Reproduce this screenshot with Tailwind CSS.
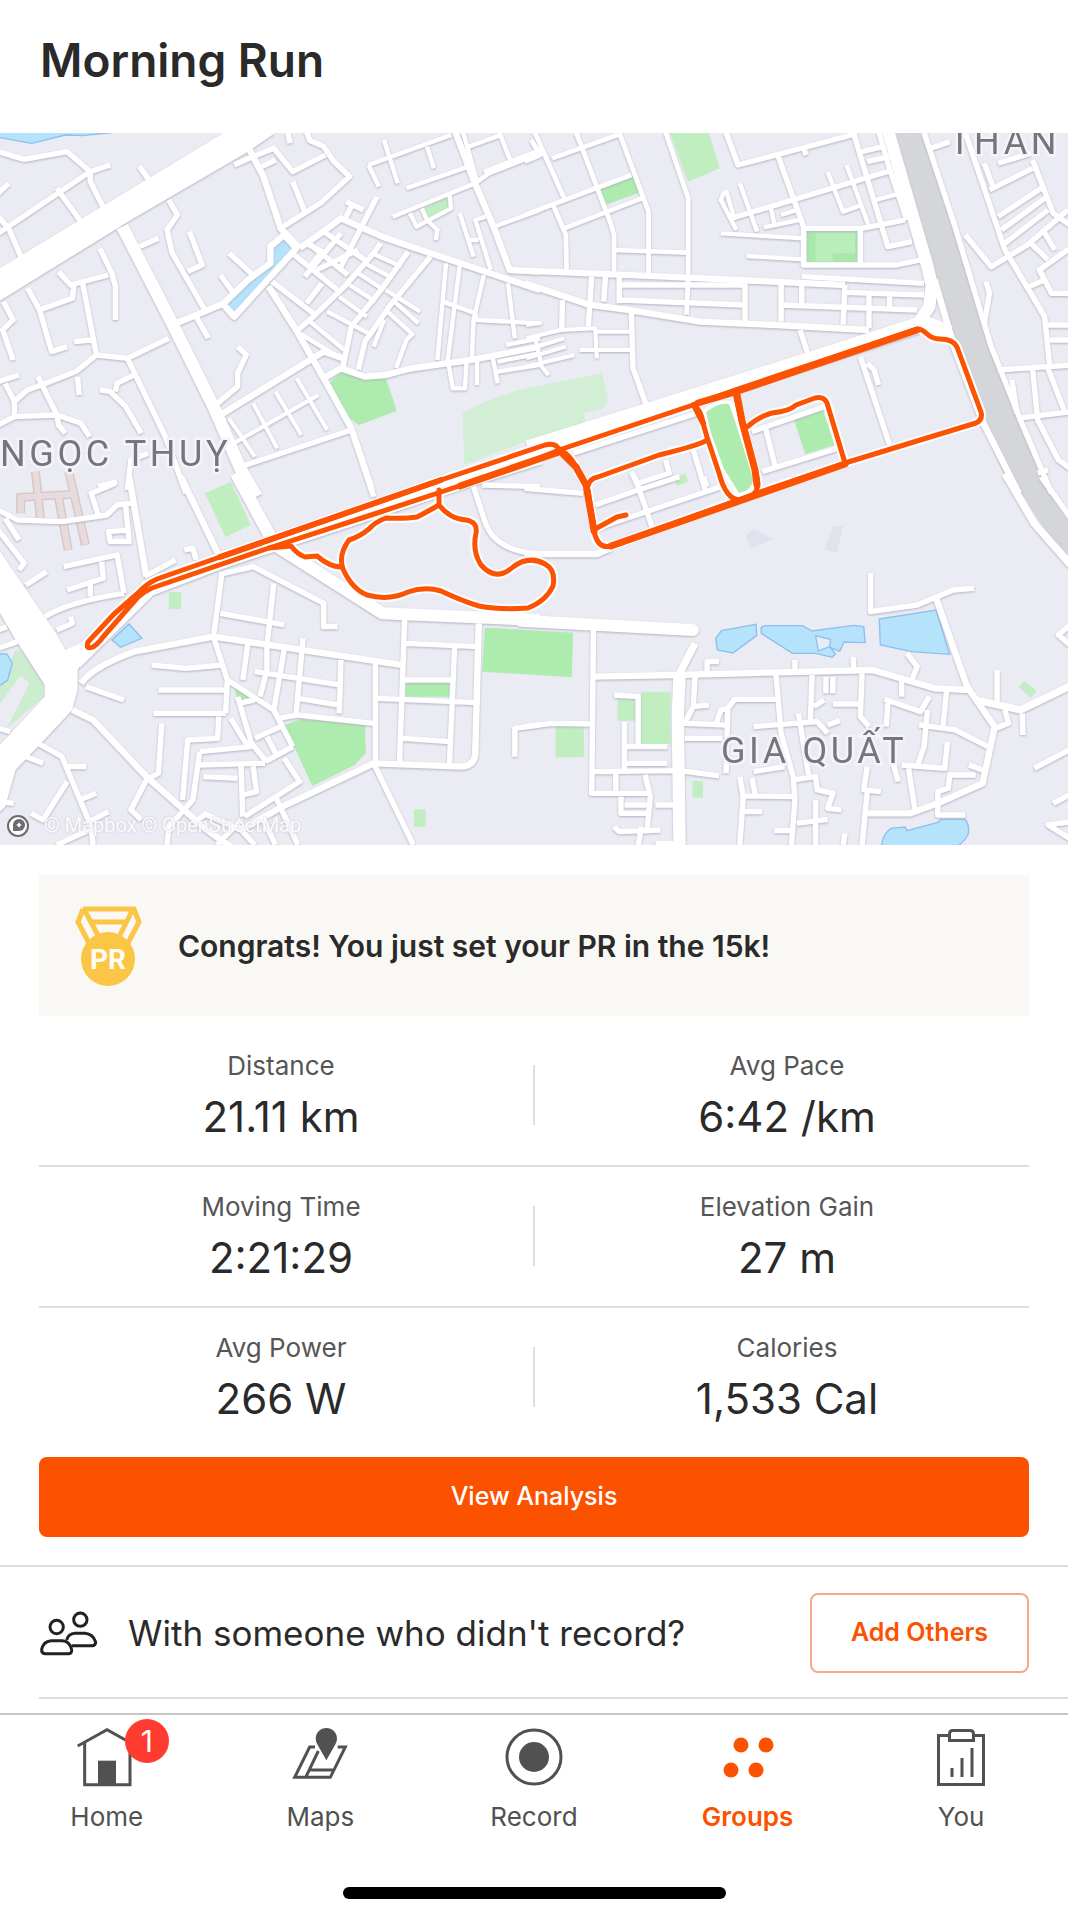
<!DOCTYPE html>
<html lang="en">
<head>
  <meta charset="UTF-8">
  <meta name="viewport" content="width=device-width, initial-scale=1.0">
  <title>Morning Run</title>

  <!-- Tailwind CSS -->
  <script src="https://cdn.jsdelivr.net/npm/@tailwindcss/browser@4"></script>
</head>

<body class="min-h-screen bg-white font-[Inter,sans-serif] text-[#2a2a2a]">

  <!-- Header -->
  <header class="px-10 pt-7 pb-[41px]">
    <h1 class="text-[46px] leading-[64px] font-semibold">Morning Run</h1>
  </header>

  <main>
    <!-- Route Map -->
    <svg class="block w-full h-auto bg-[#ebebf4]" viewBox="0 0 1068 712" role="img" aria-label="Route map" fill="none">

      <!-- Parks and water -->
      <g stroke="none">
        <g transform="translate(0 -13) scale(.3444 .3333)">
          <path fill="#b5e3fc" stroke="#8fbfee" stroke-width="4" d="M-5 52 L92 70 190 45 240 47 325 38 V30 H-5Z"/>
          <path fill="#b5e3fc" d="M658 548 L720 480 745 475 792 430 790 385 825 355 858 388 682 575Z"/>
          <path fill="#c0eec1" d="M1230 265 L1300 230 1308 270 1242 298Z"/>
          <path fill="#aeebae" d="M955 790 L990 757 1060 777 1120 773 1152 872 1042 916 1015 895Z"/>
        </g>
        <g transform="translate(528 -13) scale(.3444 .3333)">
          <path fill="#c0eec1" d="M412 38 H525 L557 145 465 185Z"/>
          <path fill="#aeebae" d="M203 208 L305 168 322 218 225 255Z"/>
          <path fill="#d2efd5" d="M-190 878 Q-90 825 0 803 L215 760 232 835 222 865 165 880 165 910 -20 970 -185 1035Z"/>
          <path fill="#a9e7ab" d="M810 332 H958 V428 H810Z"/>
          <path fill="#b9edb9" d="M835 335 H950 V400 H885 V425 H835Z"/>
          <path fill="#d5d6da" d="M1055 30 H1143 L1235 320 1340 680 1425 900 1515 1120 H1405 L1320 920 1225 640 1140 330Z"/>
          <path fill="#aeebae" d="M772 898 L855 868 890 975 805 1003Z"/>
          <path fill="#c0eec1" d="M425 1075 L457 1060 465 1085 432 1098Z"/>
        </g>
        <g transform="translate(0 347) scale(.3444 .3333)">
          <path fill="#c0eec1" d="M595 40 L670 5 728 135 655 172Z"/>
          <path fill="#c0eec1" d="M490 337 H526 V388 H490Z M1202 988 H1236 V1040 H1202Z"/>
          <path fill="#b5e3fc" stroke="#8fbfee" stroke-width="4" d="M325 480 L375 432 412 475 350 502Z"/>
          <path fill="#cdedd0" d="M-5 625 L45 510 70 510 125 610 128 650 20 745 85 610 60 585 -5 680Z"/>
          <path fill="#b5e3fc" stroke="#8fbfee" stroke-width="4" d="M-5 522 H20 L36 550 22 600 -5 620Z"/>
          <path fill="#aeebae" d="M825 735 L875 717 1060 735 1062 820 1030 855 907 918Z"/>
          <path fill="#aeebae" d="M680 620 L730 652 690 665Z M1178 605 H1305 V650 H1178Z"/>
          <path fill="#aeebae" d="M1408 443 L1664 458 1660 592 1400 575Z"/>
        </g>
        <g transform="translate(528 347) scale(.3444 .3333)">
          <path fill="#d5d6da" d="M1405 -5 H1485 L1580 145 V240 L1500 150Z"/>
          <path fill="#dfe3ec" d="M633 165 L655 148 713 178 645 205Z M885 140 L915 137 897 220 860 208Z"/>
          <g fill="#b5e3fc" stroke="#8fbfee" stroke-width="4">
            <path d="M545 475 L562 452 662 433 664 467 595 519 550 510Z"/>
            <path d="M677 443 L685 437 H797 L825 453 945 436 975 440 979 488 918 486 905 514 878 502 893 522 883 532 835 520 768 520 677 460Z"/>
            <path d="M1020 417 L1185 390 1224 523 1115 515 1023 495Z"/>
            <path d="M1025 1110 Q1028 1060 1055 1045 L1095 1041 1100 1052 1190 1027 1200 1018 H1270 Q1285 1040 1277 1065 1265 1090 1230 1110Z"/>
          </g>
          <path fill="#ebebf4" stroke="#8fbfee" stroke-width="4" d="M835 467 L878 478 876 500 843 513Z"/>
          <path fill="#c0eec1" d="M328 635 H413 V792 H328Z M260 655 H312 V722 H260Z M80 738 H162 V832 H80Z M478 903 H508 V953 H478Z M1425 622 L1442 603 1477 633 1460 653Z"/>
        </g>
      </g>

      <!-- Pedestrian lanes -->
      <g transform="translate(0 347) scale(.3444 .3333)">
        <path stroke="#d8c5c7" stroke-width="26" d="M103 -25 L118 120 M60 100 V52 L225 42 M200 -25 L248 195 M170 52 L198 210"/>
        <path stroke="#e8dbdb" stroke-width="18" d="M103 -25 L118 118 M60 98 V52 L223 42 M200 -25 L248 193 M170 52 L198 208"/>
      </g>

      <!-- Streets -->
      <g class="stroke-white drop-shadow-[0_1px_1px_#b2b2c2]" stroke-width="16" stroke-linejoin="round">
        <g transform="translate(0 -13) scale(.3444 .3333)">
          <path fill="#fff" stroke="none" d="M-5 448 L650 38 H800 L720 95 380 300 -5 545Z"/>
          <path stroke-width="36" d="M355 320 L500 610 620 860 700 1050 745 1130"/>
          <path stroke-width="19" d="M725 90 L765 170 815 325 870 385 M870 385 L945 330 990 295 1110 350 1250 400 1568 510 M640 885 L940 695 995 715 M780 500 L860 630 940 775 1020 925 1080 1110 M940 775 L990 745 1060 770 1120 765 1195 745 1370 720 1568 680 M1320 30 L1375 180 1435 325 1480 450 1568 455 M500 615 L650 550 720 480 785 430 785 380 825 345 860 385 680 590 650 555"/>
          <path d="M-5 95 L70 118 195 95 262 155 262 185 300 262 M-5 340 L60 295 262 155 320 135 M-5 290 L25 325 65 420 M-5 220 L25 190 M165 205 L235 305 M405 138 L435 185 M680 135 L735 110 795 85 850 155 945 105 M760 140 L800 120"/>
          <path d="M888 30 L900 62 940 80 970 125 1015 170 930 250 815 325 M850 185 L885 275 M835 35 L842 70 M490 240 L515 285 485 330 500 400 595 570 M405 380 L460 355 M550 335 L587 435 545 455 M665 400 L735 465 M640 465 L675 515 M570 590 L605 655"/>
          <path d="M490 655 L370 715 280 705 220 755 120 795 80 810 42 845 42 890 -5 915 M42 890 L165 885 235 910 260 950 M165 885 L170 915 190 940 M240 490 L280 705 M290 385 L325 460 335 500 335 600 M170 455 L205 495 315 465 M80 505 L115 570 150 695 195 680 M215 495 L210 535 115 570 M215 665 L265 660 M10 545 L38 600 8 630 38 720"/>
          <path d="M225 770 L230 825 M110 770 L165 885 M15 790 L42 845 M-5 785 L55 765 M370 715 L480 950 540 1120 M390 765 L340 790 335 815 M290 810 L320 815 365 860 410 940 M690 680 L715 705 690 760 690 800 620 860 M430 1000 L380 1020 370 1110 M340 1085 L285 1100"/>
          <path stroke-width="12" d="M665 895 L740 1010 M735 850 L805 985 M800 815 L875 945 M862 775 L950 930 M670 975 L925 825"/>
          <path d="M700 1040 L1020 930 M1005 245 L1055 270 M1095 230 L1010 400 990 440 M1025 250 L1000 300 M855 405 L980 510 M890 365 L1010 465 M940 335 L1060 420 M890 370 L935 395 900 440 M990 340 L885 470 M1040 390 L920 450"/>
          <path d="M1105 370 L1085 400 1000 500 910 590 865 630 M1185 395 L1110 505 1020 620 995 745 M1250 410 L1130 560 1060 665 1040 750 M790 485 L910 580 M890 550 L935 490"/>
          <path stroke-width="13" d="M1080 400 L1165 440 M1060 430 L1140 475 M1040 460 L1115 510 M1015 495 L1090 545 M985 530 L1065 590 M1120 510 L1220 575 M1140 540 L1215 610 M1125 575 L1200 645 M950 575 L1070 640 M900 605 L1000 690 M870 640 L990 715 M1115 600 L1085 680 M1200 640 L1180 660 1150 745"/>
          <path stroke-width="13" d="M1295 430 L1270 720 M1335 435 L1300 720 1315 805 1350 805 1355 720 M1405 465 L1375 600 1370 720 M1475 490 L1495 655 M1285 545 L1380 580 1385 600 1568 610 M1385 720 V795 M1430 710 L1445 790 M1445 725 L1568 700 M1445 755 L1568 735 M1470 675 L1568 655"/>
          <path stroke-width="13" d="M1070 135 L1310 45 M1070 135 L1100 200 M1115 60 L1155 190 M1240 80 L1260 145 M1180 205 L1360 140 M1140 290 L1380 190 1420 160 1568 100 M1450 38 L1485 130 M1360 80 L1455 45 M1345 38 L1385 185 M1405 155 L1568 90 M1305 225 L1310 265 1210 320 1190 280 M1225 265 L1240 300 1270 330 1265 360 M1335 280 L1375 410 M1410 290 L1380 300 1425 450 M1435 320 L1568 270 M1360 360 H1390"/>
        </g>

        <g transform="translate(528 -13) scale(.3444 .3333)">
          <path stroke-width="36" d="M1045 30 L1160 440 1178 520 M1175 480 L1165 560 1130 615"/>
          <path stroke-width="19" d="M1180 480 L1240 690 1320 905 1425 1120 M-10 452 L400 470 920 495 M-10 490 L180 555 290 570 500 605 720 615 990 630"/>
          <path stroke-width="48" d="M0 985 L580 798 1150 610 1225 640"/>
          <path d="M1150 38 L1240 320 1345 680 1430 900 1520 1120"/>
          <path stroke-width="14" d="M20 38 L105 235 M140 38 L240 310 250 345 250 455 M265 38 L350 275 350 460 M400 38 L465 235 465 480 460 585 M70 115 L260 45 M-10 285 L300 165 M75 260 L110 345 112 450 M105 325 L330 235 M250 390 L465 398 M-10 125 L35 105 10 60"/>
          <path d="M185 470 L175 620 M225 470 L220 545 M265 470 V550 M270 495 H625 M270 540 L625 555 M630 490 V605 M735 490 V605 M795 490 V550 M735 555 L1130 570 M920 495 L915 615 M920 517 L1150 525 M990 520 V625 M1050 530 V570 M100 540 L98 630 M300 575 L305 745 345 860 M790 630 L812 700"/>
          <path stroke-width="12" d="M-5 655 L95 630 195 625 200 715 M-5 690 L105 655 M-5 740 L135 705 M20 650 L40 740 60 765 M150 690 H300 M200 635 H300 M-5 715 L110 680 M-5 615 L40 608"/>
          <path d="M575 38 L610 135 940 45 M725 105 L800 320 M800 85 L808 105 M945 38 L1045 380 1115 365 M1020 38 L1045 130 1100 300 M970 95 L1030 80 M985 125 L1050 110 M590 295 L1060 150"/>
          <path stroke-width="13" d="M870 155 L915 275 970 255 M925 135 L990 320 M1010 240 L1080 220 M570 215 L560 240 605 330 M575 210 L600 300 M615 190 L665 335 M560 340 L800 355 M635 408 L800 418 M685 322 L790 300 M705 265 L715 310 M735 285 L780 270"/>
          <path d="M800 320 V435 H1070 L1140 420 M800 325 H970 L1095 300 M965 330 V430 M795 470 L1150 490"/>
          <path d="M1270 38 L1300 130 1385 390 1500 590 1515 740 M1325 130 L1350 200 M1465 120 L1525 280 1580 320 M1340 210 L1465 145 M1365 290 L1490 205 M1375 330 L1500 235 M1385 370 L1510 270 M1270 345 L1345 440 1450 375 1568 270 M1170 85 L1225 65 M1365 130 L1460 100 M1330 485 L1340 520 1325 610"/>
          <path d="M1365 750 L1580 735 M1505 615 H1580 M1515 660 H1580 M1405 780 L1420 880 M1465 745 L1480 900 1540 1020 1580 1050 M1510 745 L1560 880 M1420 895 L1580 875 M1460 370 L1510 420 M1495 330 L1530 390 M1580 380 L1485 450 1520 520 H1580 M1455 500 L1500 480 M1480 1060 L1510 1050"/>
          <path d="M965 710 L1050 975 M985 730 L1005 750 1018 795 M690 925 L720 1050 M680 1055 L900 985 M650 935 L860 860 M130 1000 L490 880 M480 990 L515 1110 M300 1055 L325 1110 M400 1020 L410 1060 320 1090"/>
        </g>

        <g transform="translate(0 347) scale(.3444 .3333)">
          <path fill="#fff" stroke="none" d="M-5 205 L30 260 160 455 190 510 250 480 265 505 225 570 225 630 210 690 110 800 45 870 15 980 -5 1000 V800 L130 650 130 615 40 470 -5 390Z"/>
          <path stroke-width="50" d="M215 545 L430 325 645 240 1050 103 1280 22 1568 -72"/>
          <path stroke-width="36" d="M685 -20 L790 180 M790 190 L1110 400 1568 420"/>
          <path stroke-width="19" d="M235 610 Q270 560 390 515 L620 470 1165 555 M210 690 L270 720 425 890 600 1050 670 1100 M700 1050 L820 980 1085 850 1345 860 Q1378 855 1380 820 L1390 430 M375 -10 L425 290 M525 -10 L635 225"/>
          <path d="M-5 90 L50 120 180 125 310 105 340 75 380 70 M335 10 L265 40 285 105 M15 115 L55 180 M-5 150 L70 250 55 270 M75 315 L135 275 M365 80 L375 185 320 185 315 155 375 150 M185 260 L340 225 360 340 M295 245 L300 295 195 330 M262 310 V350 M130 410 Q200 365 360 340 M420 290 L510 240 M535 210 L560 205 570 240 M165 450 L210 430 205 410 M-5 505 L50 485 M-5 450 L20 440"/>
          <path d="M645 275 L620 470 660 600 795 690 850 800 M825 835 L870 905 710 1010 M650 280 L735 260 940 370 940 440 980 440 M795 310 L775 500 775 570 755 650 M640 400 L825 435 M250 620 L360 660 M440 555 L540 565 645 555 M460 630 H655 M445 700 H655 M660 600 L655 700 M635 710 L632 775 545 780 530 960 M470 730 L460 880 425 900 380 990 410 1020"/>
          <path d="M110 790 L180 830 265 1040 270 1095 M190 860 H250 M75 830 L125 850 M195 905 L125 1020 90 1000 M230 960 L280 940 M250 1030 L315 995 M165 1095 L260 1050 M-5 745 L30 755 M-5 965 L40 970"/>
          <path d="M720 490 L705 600 M825 510 L795 690 M880 475 L860 700 M740 575 L985 615 M990 540 L985 700 M865 655 L980 675 M810 715 L865 705 1085 730 M1090 550 V850 M690 650 L730 790 770 840 M695 670 L740 660 M770 845 L850 800 M670 715 L720 800 M740 775 L815 740 M775 770 L800 820"/>
          <path d="M580 815 L730 800 M580 815 L560 960 490 1040 485 1095 M580 855 L770 850 M590 890 L690 895 M700 860 L705 1010 M735 860 L745 935 705 945 M800 950 L865 1095 M1085 850 L1200 1095 M590 1000 L700 1050 M560 1030 L600 1000 M630 1095 L700 1020 M700 1050 L740 1095 M760 1010 L800 1095"/>
          <path d="M1175 420 L1160 850 M1175 490 L1390 500 M1320 500 L1305 855 M1175 600 H1310 M1095 655 L1385 668 M1170 775 L1305 785 M1495 830 V745 L1568 735 M1375 20 L1410 130 Q1440 215 1568 222 M1400 15 L1568 20 M1068 -10 L1085 50"/>
        </g>

        <g transform="translate(528 347) scale(.3444 .3333)">
          <path stroke-width="36" stroke-linecap="round" d="M-20 422 L478 450 M440 590 L435 700 440 1110"/>
          <path stroke-width="22" d="M1385 -20 L1470 130 1580 260 M1300 660 L1430 690 1580 615 M485 490 L440 580"/>
          <path d="M1490 -10 L1580 120"/>
          <path stroke-width="19" d="M190 590 L430 585 1000 570 1180 625 1280 630 M1185 355 L1275 620 1355 740 1320 910 1190 970 1110 1000 985 1000 M-10 222 L200 222 240 205"/>
          <path d="M-10 25 L160 40 M195 75 L320 30 440 -10 M310 -10 L360 140 M200 145 L330 100 560 20 M510 -10 L518 20 M190 450 L185 940 H350 M520 580 V545 H555 M775 540 V575 M945 530 V570 M995 280 V395 L1130 375 1235 330 1295 325 M1362 570 V670 M1100 520 L1130 560 1115 600 M1085 600 V650 M1215 635 L1205 740 M1385 690 L1395 730 1360 745 M1435 700 L1437 765"/>
          <path d="M250 645 L320 650 V800 M280 725 V880 M285 800 H405 M285 850 H405 M190 875 L440 872 555 888 M255 880 V940 M340 885 L355 950 345 1060 M270 950 V1000 H350 M280 975 H350 M370 975 H430 M250 1040 L265 1055 385 1050 M320 1095 L330 1040 M370 1090 H430 M-10 740 L70 730 185 732"/>
          <path d="M485 590 L480 680 525 675 M480 680 L455 730 575 735 M545 735 L560 690 580 685 600 658 720 658 M580 690 L575 880 M455 775 H565 M720 585 L735 760 770 890 775 960 765 1095 M825 585 L820 720 M865 590 V640 M885 590 V640 M970 580 L965 710 990 740 M830 680 L860 660 M885 672 H965 M655 740 L840 725 870 760 M785 700 L815 885 M870 735 L905 722 M1035 658 L1140 695 1165 650 M1045 670 L1040 740 M1160 690 L1150 800 1130 860 M1135 735 L1240 750 1335 800"/>
          <path d="M1085 855 L1210 865 1218 785 M1105 865 L1125 1000 M1060 850 L1075 905 M655 875 L745 860 M615 890 L625 950 615 1095 M625 948 L770 950 M650 895 L660 945 M625 995 H680 M770 900 L835 890 840 930 885 940 870 985 910 990 M780 1030 L870 1018 M835 960 V1095 M715 1052 H765 M985 860 L975 930 1025 935 M985 935 L970 1095 M1300 885 H1225 L1220 925 1190 935 1190 1005 1270 1005 M1280 855 L1320 870 M915 1095 L920 1060"/>
          <path d="M1580 430 L1540 465 1580 500 M1470 865 L1580 805 M1525 970 L1580 940 M1580 1025 L1510 1035 1580 1080"/>
        </g>
      </g>

      <!-- Park inside the loop -->
      <path fill="#fff" d="M703 277 Q716 265 732 268 L741 292 757 345 Q756 361 737 364 L720 337 708 303Z"/>
      <path fill="#aeebae" d="M706 279 Q719 269 729 271 L735 288 753 345 Q753 357 739 360 L724 336 711 300Z"/>

      <!-- Recorded route -->
      <defs>
        <g id="route" stroke-linejoin="round" stroke-linecap="round">
          <path d="M917 196 Q922 196 926 200 Q932 206 940 206 Q953 206 957 214 L981 279 Q983 287 976 290 L845 330 760 359 611 413 Q599 416 595 402 L588 357 Q582 345 576 334 Q569 320 559 317 L693 272 735 257Z"/>
          <path d="M559 317 Q556 309 545 312 L441 347 362 375 220 424 157 446 Q146 451 138 460 L114 481 88 509 Q85 517 93 514 Q98 511 103 504 L138 464 Q145 458 152 455 L269 415 362 385 441 359 528 330 559 317"/>
          <path d="M439 357 V372 Q425 380 417 384 Q405 386 386 385 Q375 389 369 396 Q359 404 349 407 Q338 422 343 436 Q352 456 367 462 Q389 468 408 459 Q425 453 441 458 Q462 468 479 473 Q500 477 528 475 Q546 468 553 453 Q556 437 545 431 Q529 422 513 434 Q496 449 481 432 Q472 418 476 400 Q478 389 466 387 Q450 386 439 372"/>
          <path d="M269 415 L291 413 Q297 421 305 424 L317 423 Q330 434 341 434"/>
          <path d="M693 272 Q701 276 703 290 L707 304 719 340 Q726 367 740 367 M735 260 L741 287 755 337 Q762 357 751 363"/>
          <path d="M707 307 Q700 312 659 322 L598 344 Q590 345 588 353 M747 294 Q760 283 772 280 Q790 278 796 272 L815 265 Q824 263 827 270 L845 330"/>
          <path d="M597 395 L617 384 626 382"/>
        </g>
      </defs>
      <use href="#route" class="stroke-white" stroke-width="9"/>
      <use href="#route" class="stroke-[#fb5204]" stroke-width="5"/>
      <path class="stroke-[#fb5204]" stroke-width="7" stroke-linecap="round" stroke-linejoin="round" d="M698 270 L735 259 917 197 M559 319 L460 353 M559 317 L576 334 586 352 594 398 M611 413 L845 331 M737 262 L742 288 755 337 757 352"/>
      <path class="stroke-[#fb5204]" stroke-width="6" stroke-linecap="round" d="M441 347 L220 424 M694 272 L703 290"/>

      <!-- Place labels -->
      <g class="font-[Roboto,sans-serif] text-[36px] tracking-widest fill-[#75757c] stroke-[#f3f3f9]" stroke-width="5" paint-order="stroke">
        <text x="0" y="333">NGỌC THUỴ</text>
        <text x="949" y="21">THAN</text>
        <text x="721" y="630">GIA QUẤT</text>
      </g>

      <!-- Attribution -->
      <text class="font-[Roboto,sans-serif] text-[20px] fill-white/90 drop-shadow-[0_0_1px_#c4c4ce]" x="44" y="699">© Mapbox © OpenStreetMap</text>
      <circle cx="18" cy="693" r="10" class="fill-white stroke-[#6b6b70]" stroke-width="2"/>
      <path class="fill-[#6b6b70]" d="M13 698 V692 A6 6 0 1 1 19 698Z"/>
      <path class="fill-white" d="M19 689 L20 691 22 692 20 693 19 695 18 693 16 692 18 691Z"/>
    </svg>

    <!-- Personal record -->
    <section class="mx-[39px] mt-[30px] flex h-[141px] items-center gap-[34px] bg-[#f9f8f4] px-[35px]">
      <svg class="h-[82px] w-[70px] shrink-0" viewBox="0 0 70 82" fill="none" aria-hidden="true">
        <path class="stroke-[#fbc646]" stroke-width="5" d="M9 4 H60 L65 17 54 38 M15 38 L4 17 9 4 M11 6 L26 34 M58 6 L44 34 M17 17 H53"/>
        <circle cx="34" cy="54" r="27" class="fill-[#fbc646]"/>
        <text x="34" y="64" text-anchor="middle" class="fill-[#fffdf5] font-[Roboto,sans-serif] text-[28px] font-bold">PR</text>
      </svg>
      <p class="text-[30px] leading-10 font-semibold">Congrats! You just set your PR in the 15k!</p>
    </section>

    <!-- Stats -->
    <dl class="mx-[39px] divide-y-2 divide-[#dedede]">
      <div class="flex h-[151px] items-center gap-2.5 pt-2">
        <div class="flex-1 text-center">
          <dt class="text-[26px] leading-9 text-[#565656]">Distance</dt>
          <dd class="pt-2 text-[42px] leading-[50px]">21.11 km</dd>
        </div>
        <span class="h-[60px] w-0.5 bg-[#dedede]"></span>
        <div class="flex-1 text-center">
          <dt class="text-[26px] leading-9 text-[#565656]">Avg Pace</dt>
          <dd class="pt-2 text-[42px] leading-[50px]">6:42 /km</dd>
        </div>
      </div>
      <div class="flex h-[141px] items-center gap-2.5 pb-0.5">
        <div class="flex-1 text-center">
          <dt class="text-[26px] leading-9 text-[#565656]">Moving Time</dt>
          <dd class="pt-2 text-[42px] leading-[50px]">2:21:29</dd>
        </div>
        <span class="h-[60px] w-0.5 bg-[#dedede]"></span>
        <div class="flex-1 text-center">
          <dt class="text-[26px] leading-9 text-[#565656]">Elevation Gain</dt>
          <dd class="pt-2 text-[42px] leading-[50px]">27 m</dd>
        </div>
      </div>
      <div class="flex h-[141px] items-center gap-2.5 pb-1">
        <div class="flex-1 text-center">
          <dt class="text-[26px] leading-9 text-[#565656]">Avg Power</dt>
          <dd class="pt-2 text-[42px] leading-[50px]">266 W</dd>
        </div>
        <span class="h-[60px] w-0.5 bg-[#dedede]"></span>
        <div class="flex-1 text-center">
          <dt class="text-[26px] leading-9 text-[#565656]">Calories</dt>
          <dd class="pt-2 text-[42px] leading-[50px]">1,533 Cal</dd>
        </div>
      </div>
    </dl>

    <div class="border-b-2 border-[#dedede] px-[39px] pt-2 pb-7">
      <button type="button" class="h-20 w-full rounded-lg bg-[#fc5200] text-[25px] font-medium text-white">View Analysis</button>
    </div>

    <!-- Add others -->
    <section class="ml-[39px] flex items-center border-b-2 border-[#dedede] pt-[26px] pr-[39px] pb-6">
      <svg class="h-[45px] w-[59px] shrink-0" viewBox="30 60 177 135" fill="none" stroke="#222" stroke-width="9" stroke-linejoin="round" aria-hidden="true">
        <circle cx="83" cy="108" r="20"/>
        <circle cx="154" cy="86" r="20"/>
        <path d="M66 149 H100 Q122 150 128 176 Q129 188 118 188 H48 Q37 187 38 175 Q43 151 66 149Z"/>
        <path d="M113 147 Q118 128 138 127 H168 Q192 129 200 153 Q200 163 190 164 H128"/>
      </svg>
      <h2 class="flex-1 pl-[30px] text-[35px] leading-10">With someone who didn't record?</h2>
      <button type="button" class="h-20 w-[219px] rounded-lg border-2 border-[#f5a987] text-[25px] font-semibold text-[#fc5200]">Add Others</button>
    </section>
  </main>

  <!-- Bottom navigation -->
  <nav class="mt-3.5 border-t-2 border-[#c6c6c6] pt-3 text-[26px] leading-9 text-[#515151]">
    <div class="flex">
      <a href="#" class="flex flex-1 flex-col items-center gap-3">
        <span class="relative">
          <svg class="size-[60px]" viewBox="135 412 180 180" fill="none" stroke="#515151" stroke-width="9" aria-hidden="true">
            <path d="M137 469 L225 420 313 469 M158 458 V585 H294 V458"/>
            <path fill="#515151" stroke="none" d="M198 513 H252 V585 H198Z"/>
          </svg>
          <span class="absolute -top-2 left-12 flex size-11 items-center justify-center rounded-full bg-[#ff3b30] text-[30px] text-white">1</span>
        </span>
        Home
      </a>
      <a href="#" class="flex flex-1 flex-col items-center gap-3">
        <svg class="size-[60px]" viewBox="777 412 180 180" fill="none" stroke="#515151" stroke-width="9" aria-hidden="true">
          <path d="M852 472 H836 L791 563 H898 L943 472 H920 M862 484 L824 563 M836 541 H906"/>
          <path fill="#515151" stroke="none" d="M886 512 L860 466 Q854 456 854 447 A32 32 0 0 1 918 447 Q918 456 912 466Z"/>
        </svg>
        Maps
      </a>
      <a href="#" class="flex flex-1 flex-col items-center gap-3">
        <svg class="size-[60px]" viewBox="0 0 60 60" fill="none" stroke="#515151" stroke-width="3" aria-hidden="true">
          <circle cx="30" cy="30" r="27"/>
          <circle cx="30" cy="30" r="15" fill="#515151" stroke="none"/>
        </svg>
        Record
      </a>
      <a href="#" class="flex flex-1 flex-col items-center gap-3 font-semibold text-[#fc5200]">
        <svg class="size-[60px] fill-[#fc5200]" viewBox="0 0 60 60" aria-hidden="true">
          <circle cx="23" cy="18" r="7.5"/>
          <circle cx="48" cy="18" r="7.5"/>
          <circle cx="13" cy="43" r="7.5"/>
          <circle cx="38" cy="43" r="7.5"/>
        </svg>
        Groups
      </a>
      <a href="#" class="flex flex-1 flex-col items-center gap-3">
        <svg class="size-[60px]" viewBox="0 0 60 60" fill="none" stroke="#515151" stroke-width="3" aria-hidden="true">
          <path d="M19 8.5 H7.5 V57.5 H52.5 V8.5 H42 M21 41 V50 M31 31 V50 M41 21 V50"/>
          <path d="M18.5 13.5 V7 Q18.5 3.5 22 3.5 H39 Q42.5 3.5 42.5 7 V13.5Z"/>
        </svg>
        You
      </a>
    </div>
    <div class="mx-auto mt-[52px] mb-5 h-3 w-[383px] rounded-full bg-black"></div>
  </nav>

</body>
</html>
